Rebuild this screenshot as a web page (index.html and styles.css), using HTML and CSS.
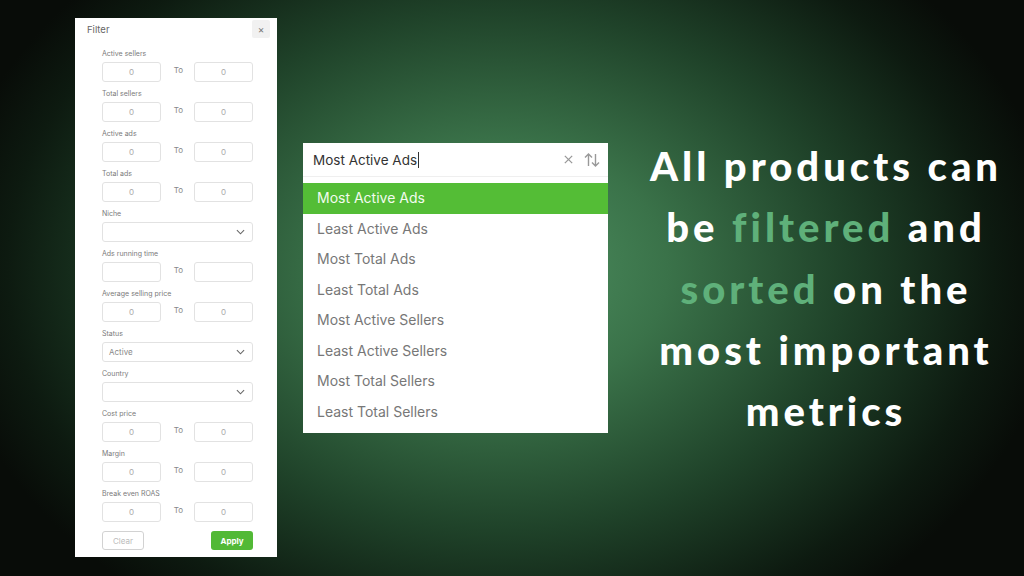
FILE: index.html
```html
<!DOCTYPE html>
<html lang="en">
<head>
  <meta charset="UTF-8" />
  <meta name="viewport" content="width=device-width, initial-scale=1.0"/>
  <title>Filter and sort</title>
  <link rel="stylesheet" href="styles.css">
</head>
<body>

  <div class="stage">

    <div class="filter-panel">
      <div class="filter-head">
        <span class="filter-title">Filter</span>
        <span class="close-btn">&times;</span>
      </div>

      <div class="filter-form">
        <div class="field">
          <label>Active sellers</label>
          <div class="range"><div class="num">0</div><span class="to">To</span><div class="num">0</div></div>
        </div>
        <div class="field">
          <label>Total sellers</label>
          <div class="range"><div class="num">0</div><span class="to">To</span><div class="num">0</div></div>
        </div>
        <div class="field">
          <label>Active ads</label>
          <div class="range"><div class="num">0</div><span class="to">To</span><div class="num">0</div></div>
        </div>
        <div class="field">
          <label>Total ads</label>
          <div class="range"><div class="num">0</div><span class="to">To</span><div class="num">0</div></div>
        </div>
        <div class="field">
          <label>Niche</label>
          <div class="select"><span></span><svg class="chev" viewBox="0 0 10 6"><path d="M1 1l4 4 4-4"/></svg></div>
        </div>
        <div class="field">
          <label>Ads running time</label>
          <div class="range"><div class="num"></div><span class="to">To</span><div class="num"></div></div>
        </div>
        <div class="field">
          <label>Average selling price</label>
          <div class="range"><div class="num">0</div><span class="to">To</span><div class="num">0</div></div>
        </div>
        <div class="field">
          <label>Status</label>
          <div class="select"><span>Active</span><svg class="chev" viewBox="0 0 10 6"><path d="M1 1l4 4 4-4"/></svg></div>
        </div>
        <div class="field">
          <label>Country</label>
          <div class="select"><span></span><svg class="chev" viewBox="0 0 10 6"><path d="M1 1l4 4 4-4"/></svg></div>
        </div>
        <div class="field">
          <label>Cost price</label>
          <div class="range"><div class="num">0</div><span class="to">To</span><div class="num">0</div></div>
        </div>
        <div class="field">
          <label>Margin</label>
          <div class="range"><div class="num">0</div><span class="to">To</span><div class="num">0</div></div>
        </div>
        <div class="field">
          <label>Break even ROAS</label>
          <div class="range"><div class="num">0</div><span class="to">To</span><div class="num">0</div></div>
        </div>

        <div class="actions">
          <button class="btn-clear">Clear</button>
          <button class="btn-apply">Apply</button>
        </div>
      </div>
    </div>

    <div class="sort-box">
      <div class="sort-search">
        <span class="sort-value">Most Active Ads</span><span class="caret"></span>
        <span class="sort-icons">
          <svg class="ico" viewBox="0 0 12 12"><path d="M2 2l8 8M10 2l-8 8"/></svg>
          <svg class="ico ico-sort" viewBox="0 0 16 14"><path d="M4.5 13V1M1 4.5l3.5-3.5 3.5 3.5M11.5 1v12M8 9.5l3.5 3.5 3.5-3.5"/></svg>
        </span>
      </div>
      <ul class="sort-list">
        <li class="active">Most Active Ads</li>
        <li>Least Active Ads</li>
        <li>Most Total Ads</li>
        <li>Least Total Ads</li>
        <li>Most Active Sellers</li>
        <li>Least Active Sellers</li>
        <li>Most Total Sellers</li>
        <li>Least Total Sellers</li>
      </ul>
    </div>

    <div class="headline">
      All products can<br>
      be <span class="hl">filtered</span> and<br>
      <span class="hl">sorted</span> on the<br>
      most important<br>
      metrics
    </div>

  </div>

</body>
</html>
```

FILE: styles.css
```css
body {
  margin: 0;
  padding: 0;
  width: 1024px;
  height: 576px;
  overflow: hidden;
  font-family: Inter, "Noto Sans", sans-serif;
  background: radial-gradient(ellipse 560px 420px at 500px 270px, #4f9262 0%, #3a7249 30%, #1f4229 62%, #0d1a10 88%, #080c08 100%);
}
.stage {
  display: flex;
  align-items: flex-start;
  padding-left: 75px;
  height: 576px;
  box-sizing: border-box;
}

/* filter panel */
.filter-panel {
  margin-top: 18px;
  width: 202px;
  height: 539px;
  background: #fff;
  box-sizing: border-box;
}
.filter-head {
  display: flex;
  justify-content: space-between;
  align-items: center;
  height: 22px;
  padding: 0 7px 0 12px;
}
.filter-title {
  font-size: 9.5px;
  color: #666;
}
.close-btn {
  width: 18px;
  height: 18px;
  background: #f1f1f1;
  color: #777;
  font-size: 10px;
  line-height: 18px;
  text-align: center;
  border-radius: 2px;
}
.filter-form {
  padding: 9px 24px 0 27px;
}
.field {
  margin-bottom: 7px;
}
.field label {
  display: block;
  font-size: 7px;
  line-height: 10px;
  color: #7a7a7a;
  margin-bottom: 3px;
}
.range {
  display: flex;
  align-items: center;
  justify-content: space-between;
}
.num, .select {
  height: 20px;
  box-sizing: border-box;
  border: 1px solid #e2e2e2;
  border-radius: 3px;
  font-size: 8px;
  color: #aaa;
}
.num {
  width: 59px;
  line-height: 18px;
  text-align: center;
}
.to {
  font-size: 8px;
  color: #888;
  margin-top: -4px;
  margin-left: 2px;
}
.select {
  display: flex;
  align-items: center;
  justify-content: space-between;
  padding: 0 7px 0 6px;
  color: #888;
}
.chev {
  width: 9px;
  height: 6px;
  fill: none;
  stroke: #666;
  stroke-width: 1.2;
}
.actions {
  display: flex;
  justify-content: space-between;
  margin-top: 9px;
}
.actions button {
  width: 42px;
  height: 19px;
  border-radius: 3px;
  font-family: Inter, "Noto Sans", sans-serif;
  font-size: 8px;
  padding: 0;
}
.btn-clear {
  background: #fff;
  border: 1px solid #d2d2d2;
  color: #bbb;
}
.btn-apply {
  background: #52b936;
  border: none;
  color: #fff;
  font-weight: bold;
}

/* sort dropdown */
.sort-box {
  margin-top: 143px;
  margin-left: 26px;
  width: 305px;
  background: #fff;
}
.sort-search {
  display: flex;
  align-items: center;
  height: 33px;
  padding: 0 8px 0 10px;
  border-bottom: 1px solid #efefef;
}
.sort-value {
  font-size: 13.5px;
  color: #333;
}
.caret {
  width: 1px;
  height: 16px;
  background: #333;
  margin-left: 1px;
}
.sort-icons {
  margin-left: auto;
  display: flex;
  align-items: center;
  gap: 10px;
}
.ico {
  width: 11px;
  height: 11px;
  fill: none;
  stroke: #999;
  stroke-width: 1.4;
}
.ico-sort {
  width: 16px;
  height: 14px;
}
.sort-list {
  list-style: none;
  margin: 0;
  padding: 6px 0;
}
.sort-list li {
  height: 30.5px;
  line-height: 30.5px;
  padding-left: 14px;
  font-size: 14px;
  color: #777;
}
.sort-list li.active {
  background: #54bd36;
  color: #f2fbef;
}

/* headline */
.headline {
  flex: 1;
  margin-top: 136px;
  margin-left: 30px;
  margin-right: 10px;
  text-align: center;
  font-family: Lato, sans-serif;
  font-weight: 900;
  font-size: 40px;
  line-height: 61.3px;
  letter-spacing: 4px;
  color: #fff;
}
.hl {
  color: #5fb07a;
}
```
